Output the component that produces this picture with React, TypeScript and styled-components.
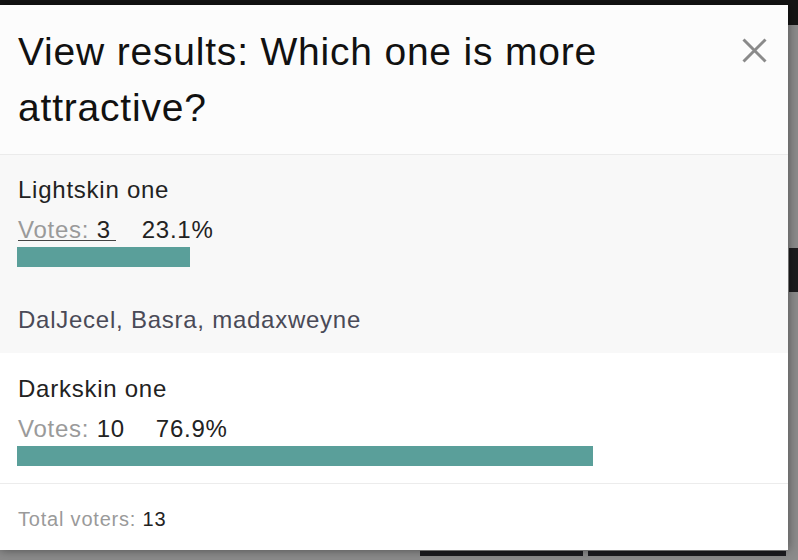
import React from "react";
import styled, { createGlobalStyle } from "styled-components";

const GlobalStyle = createGlobalStyle`
    html, body {
        margin: 0;
        padding: 0;
        background: #8b8b8b;
    }
    * {
        box-sizing: border-box;
    }
`

const Page = styled.div`
    position: relative;
    width: 798px;
    height: 560px;
    overflow: hidden;
    display: flex;
    flex-direction: column;
    background: #8b8b8b;
    font-family: "Liberation Sans", Arial, sans-serif;
`

const TopBar = styled.div`
    height: 25px;
    background: #151515;
`

const SideTab = styled.div`
    align-self: flex-end;
    width: 9px;
    height: 44px;
    margin-top: 223px;
    background: #1c1c1e;
`

const BottomButtons = styled.div`
    margin-top: auto;
    margin-bottom: 4px;
    display: flex;
    justify-content: flex-end;
    gap: 5px;
    padding-right: 12px;
`

const BottomButton = styled.div<{ w: number }>`
    width: ${({ w }) => w}px;
    height: 5px;
    background: #1b1b1f;
`

const Modal = styled.div`
    position: absolute;
    top: 5px;
    left: 0;
    width: 788px;
    height: 545px;
    background: #fff;
    box-shadow: 0 0 10px rgba(0, 0, 0, 0.45);
    display: flex;
    flex-direction: column;
`

const Header = styled.div`
    height: 150px;
    display: flex;
    align-items: flex-start;
    gap: 16px;
    padding: 19px 21px 0 18px;
    background: #fcfcfc;
    border-bottom: 1px solid #ebebeb;
`

const Title = styled.h4`
    flex: 1;
    margin: 0;
    font-size: 39px;
    line-height: 56px;
    letter-spacing: 0.8px;
    font-weight: normal;
    color: #111;
`

const Close = styled.button`
    width: 25px;
    height: 25px;
    margin-top: 14px;
    padding: 0;
    border: none;
    background: none;
    cursor: pointer;

    svg {
        display: block;
    }
`

const Option = styled.div<{ shaded?: boolean }>`
    display: flex;
    flex-direction: column;
    padding: ${({ shaded }) => (shaded ? "21px 22px 19px 17px" : "22px 22px 17px 17px")};
    background: ${({ shaded }) => (shaded ? "#f8f8f8" : "#fff")};
    border-bottom: ${({ shaded }) => (shaded ? "none" : "1px solid #ececec")};
`

const OptionName = styled.div`
    font-size: 24px;
    line-height: 28px;
    letter-spacing: 0.75px;
    color: #222;
    padding-left: 1px;
`

const VotesRow = styled.div`
    display: flex;
    align-items: flex-start;
    margin-top: 12px;
    height: 28px;
    font-size: 24px;
    line-height: 28px;
    letter-spacing: 0.75px;
    padding-left: 1px;
`

const VotesLink = styled.span<{ link?: boolean }>`
    display: block;
    height: 25px;
    padding-right: 5px;
    color: #222;
    border-bottom: ${({ link }) => (link ? "1px solid #444" : "none")};

    em {
        font-style: normal;
        color: #9a9a9a;
    }
`

const Percent = styled.span`
    margin-left: 26px;
    color: #222;
`

const Track = styled.div`
    margin-top: 3px;
    height: 20px;
`

const Bar = styled.div`
    height: 100%;
    background: #5a9f9a;
`

const Voters = styled.div`
    margin-top: 39px;
    font-size: 24px;
    line-height: 28px;
    letter-spacing: 0.75px;
    color: #4a4a57;
    padding-left: 1px;
`

const Footer = styled.div`
    padding: 23px 18px 0;
    font-size: 20px;
    line-height: 24px;
    letter-spacing: 0.8px;
    color: #222;

    em {
        font-style: normal;
        color: #9a9a9a;
    }
`

interface Result {
    name: string
    votes: number
    percent: number
    voters?: string
}

const results: Result[] = [
    { name: "Lightskin one", votes: 3, percent: 23.1, voters: "DalJecel, Basra, madaxweyne" },
    { name: "Darkskin one", votes: 10, percent: 76.9 },
]

export default function App() {
    return (
        <>
            <GlobalStyle />
            <Page>
                <TopBar />
                <SideTab />
                <BottomButtons>
                    <BottomButton w={163} />
                    <BottomButton w={198} />
                </BottomButtons>

                <Modal>
                    <Header>
                        <Title>View results: Which one is more attractive?</Title>
                        <Close aria-label="Close">
                            <svg width="25" height="25" viewBox="0 0 25 25">
                                <path d="M1.5 1.5 L23.5 23.5 M23.5 1.5 L1.5 23.5" stroke="#8a8a8a" strokeWidth="3" />
                            </svg>
                        </Close>
                    </Header>

                    {results.map((r) => (
                        <Option key={r.name} shaded={!!r.voters}>
                            <OptionName>{r.name}</OptionName>
                            <VotesRow>
                                <VotesLink link={!!r.voters}>
                                    <em>Votes:</em> {r.votes}
                                </VotesLink>
                                <Percent>{r.percent}%</Percent>
                            </VotesRow>
                            <Track>
                                <Bar style={{ width: `${r.percent}%` }} />
                            </Track>
                            {r.voters && <Voters>{r.voters}</Voters>}
                        </Option>
                    ))}

                    <Footer>
                        <em>Total voters:</em> 13
                    </Footer>
                </Modal>
            </Page>
        </>
    )
}
